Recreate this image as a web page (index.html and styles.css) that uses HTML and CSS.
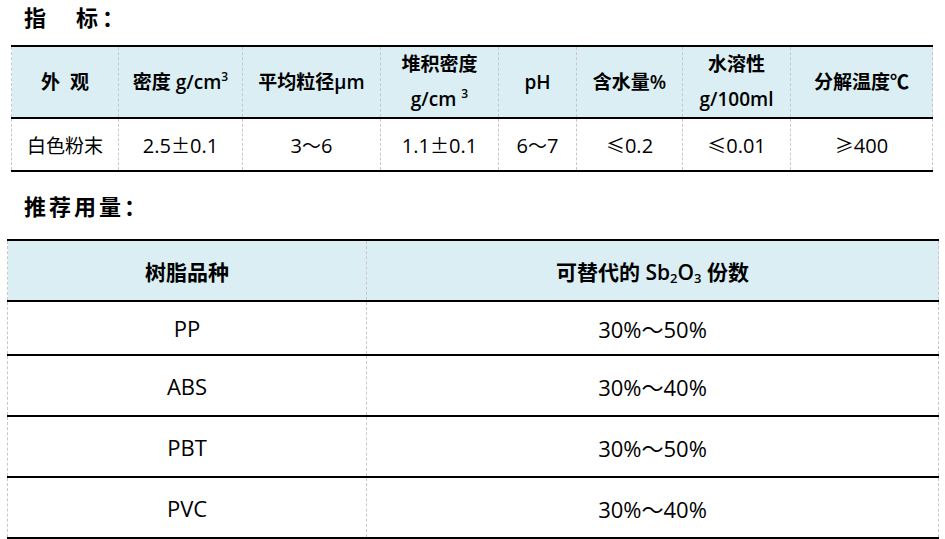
FILE: index.html
```html
<!DOCTYPE html>
<html lang="zh-CN">
<head>
<meta charset="utf-8">
<title>指标</title>
<link rel="stylesheet" href="styles.css">
</head>
<body>
<h2 class="title title-first">指<span class="gap">　</span>标<span class="colon">：</span></h2>
<table class="spec">
  <colgroup>
    <col style="width:107px"><col style="width:124px"><col style="width:138px"><col style="width:118px">
    <col style="width:78px"><col style="width:106px"><col style="width:108px"><col style="width:142px">
  </colgroup>
  <thead>
    <tr>
      <th>外&nbsp;&nbsp;观</th>
      <th>密度 g/cm<sup>3</sup></th>
      <th>平均粒径μm</th>
      <th>堆积密度<br>g/cm <sup>3</sup></th>
      <th>pH</th>
      <th>含水量%</th>
      <th>水溶性<br>g/100ml</th>
      <th>分解温度℃</th>
    </tr>
  </thead>
  <tbody>
    <tr>
      <td>白色粉末</td>
      <td><span class="num">2.5</span><span class="cj">±</span><span class="num">0.1</span></td>
      <td><span class="num">3</span><span class="cj">～</span><span class="num">6</span></td>
      <td><span class="num">1.1</span><span class="cj">±</span><span class="num">0.1</span></td>
      <td><span class="num">6</span><span class="cj">～</span><span class="num">7</span></td>
      <td><span class="cj">≤</span><span class="num">0.2</span></td>
      <td><span class="cj">≤</span><span class="num">0.01</span></td>
      <td><span class="cj">≥</span><span class="num">400</span></td>
    </tr>
  </tbody>
</table>
<h2 class="title title-second">推荐用量<span class="colon">：</span></h2>
<table class="usage">
  <colgroup>
    <col style="width:359px"><col style="width:572px">
  </colgroup>
  <thead>
    <tr><th>树脂品种</th><th>可替代的 Sb<sub>2</sub>O<sub>3</sub> 份数</th></tr>
  </thead>
  <tbody>
    <tr class="first"><td>PP</td><td>30%<span class="cj">～</span>50%</td></tr>
    <tr><td>ABS</td><td>30%<span class="cj">～</span>40%</td></tr>
    <tr><td>PBT</td><td>30%<span class="cj">～</span>50%</td></tr>
    <tr><td>PVC</td><td>30%<span class="cj">～</span>40%</td></tr>
  </tbody>
</table>
</body>
</html>
```

FILE: styles.css
```css
html, body {
  margin: 0;
  padding: 0;
  background: #fff;
}
body {
  font-family: "Open Sans", "Noto Sans CJK SC", sans-serif;
  color: #000;
  width: 945px;
}
.cj {
  font-family: "Noto Sans CJK SC", sans-serif;
}
.num {
  font-size: 20px;
}
.title {
  margin: 0;
  font-family: "Noto Sans CJK SC", sans-serif;
  font-size: 22px;
  font-weight: bold;
  line-height: 32px;
  letter-spacing: 4px;
  padding-left: 24px;
}
.title .colon {
  font-family: "Noto Sans CJK JP", sans-serif;
}
.title-second {
  margin-top: 17px;
  margin-bottom: 18px;
  letter-spacing: 3px;
}
table {
  border-collapse: collapse;
  table-layout: fixed;
}
th, td {
  padding: 0;
  text-align: center;
  vertical-align: middle;
  border-left: 1px dashed #c8c8c8;
  border-right: 1px dashed #c8c8c8;
}
thead th {
  background: #daeef3;
  border-top: 2px solid #000;
  border-bottom: 2px solid #000;
}
tbody td {
  border-bottom: 2px solid #000;
}
.spec {
  margin: 13px 0 0 11px;
  width: 922px;
  font-size: 19px;
}
.spec th {
  font-weight: 600;
  height: 63px;
  line-height: 35px;
}
.spec td {
  height: 51px;
}
.spec sup {
  font-size: 12px;
  vertical-align: 8px;
  line-height: 0;
}
.usage {
  margin-left: 7px;
  width: 931px;
}
.usage th {
  font-size: 21px;
  font-weight: 600;
  height: 59px;
}
.usage sub {
  font-size: 13px;
  vertical-align: -3px;
  line-height: 0;
}
.usage td {
  font-size: 22px;
  height: 59px;
}
.usage tr.first td {
  height: 52px;
}
```
